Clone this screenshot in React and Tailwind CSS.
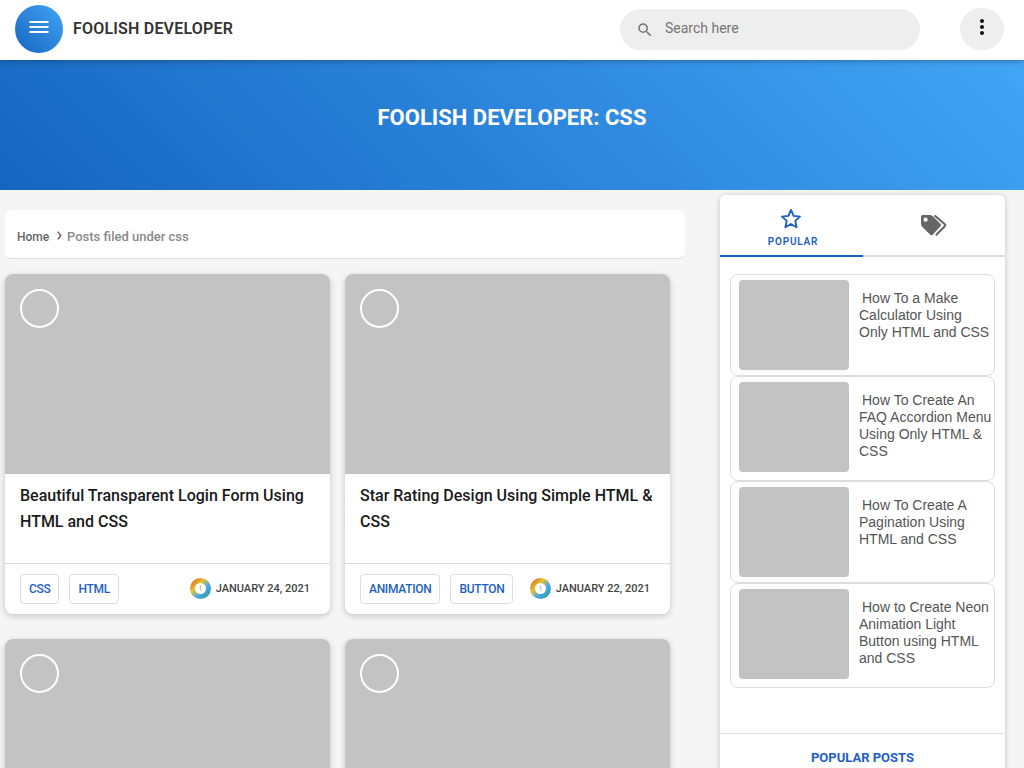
import { MdSearch, MdMoreVert } from "react-icons/md";

const posts = [
  { title: "Beautiful Transparent Login Form Using HTML and CSS", tags: ["CSS", "HTML"], date: "JANUARY 24, 2021" },
  { title: "Star Rating Design Using Simple HTML & CSS", tags: ["ANIMATION", "BUTTON"], date: "JANUARY 22, 2021" },
  { title: "", tags: [], date: "" },
  { title: "", tags: [], date: "" },
];

const popular = [
  { lines: ["How To a Make", "Calculator Using", "Only HTML and CSS"] },
  { lines: ["How To Create An", "FAQ Accordion Menu", "Using Only HTML &", "CSS"] },
  { lines: ["How To Create A", "Pagination Using", "HTML and CSS"] },
  { lines: ["How to Create Neon", "Animation Light", "Button using HTML", "and CSS"] },
];

function ClockBadge() {
  return (
    <span className="-mt-px flex size-[21px] items-center justify-center rounded-full bg-[linear-gradient(135deg,#e0702c_12%,#e6c42c_36%,#42a5f5_64%,#2fa572_90%)]">
      <svg viewBox="0 0 11 11" className="size-[11px]">
        <circle cx="5.5" cy="5.5" r="5.5" fill="#fff" />
        <path d="M5.3 2.5v3.2l1.2 1.8" fill="none" stroke="#a9b78a" strokeWidth="1" />
      </svg>
    </span>
  );
}

function Header() {
  return (
    <header className="relative z-10 flex h-[60px] shrink-0 items-start bg-white pl-[15px] pr-5 shadow-[0_1px_6px_rgba(0,0,0,0.3)]">
      <button className="mt-[5px] flex size-12 justify-center rounded-full bg-[linear-gradient(45deg,#1565c0,#42a5f5)] pt-[10px] text-white">
        <svg viewBox="0 0 20 24" className="h-6 w-5">
          <path d="M0.5 6h19v2h-19zM0.5 11h19v2h-19zM0.5 16h19v2h-19z" fill="currentColor" />
        </svg>
      </button>
      <div className="ml-[10px] mt-[17px] text-[16px] font-semibold leading-6 tracking-[0.2px] text-[#333]">FOOLISH DEVELOPER</div>
      <div className="ml-auto mt-[9px] flex h-[41px] w-[300px] items-center rounded-full bg-[#eee] pl-4 text-[#757575]">
        <MdSearch className="mt-px size-[18px]" />
        <span className="ml-[11px] -mt-[3px] text-[14px]">Search here</span>
      </div>
      <button className="ml-10 mt-[8px] flex h-[42px] w-11 justify-center rounded-full bg-[#eee] pt-[7px] text-[#111]">
        <MdMoreVert className="size-6" />
      </button>
    </header>
  );
}

function PostCard({ post }) {
  return (
    <article className="flex h-[340px] w-[325px] flex-col overflow-hidden rounded-lg bg-white shadow-[0_2px_6px_rgba(0,0,0,0.2)]">
      <div className="h-[200px] shrink-0 bg-[#c3c3c3] pl-[15px] pt-[15px]">
        <div className="size-[39px] rounded-full border-2 border-white" />
      </div>
      <h2 className="h-[89px] shrink-0 px-[15px] pt-[9px] text-[16px] font-medium leading-[26px] text-[#1a1a1a]">{post.title}</h2>
      <div className="flex h-[51px] items-center border-t border-[#ddd] pl-[15px] pr-5">
        {post.tags.map((tag) => (
          <span key={tag} className="mr-[10px] h-[30px] rounded-[4px] border border-[#ddd] px-2 text-[12px] font-medium leading-[28px] tracking-[-0.3px] text-[#1d5fc4]">{tag}</span>
        ))}
        {post.date && (
          <span className="ml-auto flex items-center gap-[5px] text-[11px] font-medium text-[#444]">
            <ClockBadge />
            {post.date}
          </span>
        )}
      </div>
    </article>
  );
}

function Sidebar() {
  return (
    <aside className="ml-[35px] mt-[5px] flex h-[700px] w-[285px] flex-col rounded-t-md bg-white shadow-[0_1px_6px_rgba(0,0,0,0.2)]">
      <div className="flex h-[62px] shrink-0">
        <div className="flex w-[143px] flex-col items-center border-b-2 border-[#1565c0] pt-[13px] text-[#1d5fc4]">
          <svg viewBox="0 0 22 22" className="mr-[1px] size-[22px]">
            <path d="M11 2L13.6 7.9L20 8.6L15.3 12.9L16.6 19.2L11 16L5.4 19.2L6.7 12.9L2 8.6L8.4 7.9Z" fill="none" stroke="currentColor" strokeWidth="1.9" strokeLinejoin="round" />
          </svg>
          <span className="mt-[4px] pl-[3px] text-[10px] font-semibold leading-[15px] tracking-[0.8px]">POPULAR</span>
        </div>
        <div className="flex flex-1 justify-center border-b-2 border-[#ddd] pt-[20px] text-[#666]">
          <svg viewBox="0 0 26 21" className="h-[21px] w-[26px]" fill="currentColor">
            <path fillRule="evenodd" d="M1.6 0H8.5Q10.4 0 11.8 1.3L19.6 9.1Q20.6 10.2 19.6 11.3L11.6 19.8Q10.4 20.9 9.3 19.8L1.4 11.9Q0 10.5 0 8.8V1.6Q0 0 1.6 0ZM4.6 2.6A2.1 2.1 0 1 0 4.6 6.8A2.1 2.1 0 1 0 4.6 2.6Z" />
            <path d="M13.5.4L23.8 9.2Q24.7 10.2 23.8 11.2L14.8 20.2" fill="none" stroke="currentColor" strokeWidth="2" />
          </svg>
        </div>
      </div>
      <div className="mx-[10px] mt-[17px] flex flex-col">
        {popular.map(({ lines }) => (
          <div key={lines[0]} className="flex rounded-lg border border-[#ddd] pb-[5px] pl-2 pt-[5px]">
            <div className="h-[90px] w-[110px] shrink-0 rounded-[4px] bg-[#c3c3c3]" />
            <p className="ml-[10px] mt-[10px] whitespace-nowrap pb-[15px] font-['Liberation_Sans',Arial,sans-serif] text-[14px] leading-[17px] text-[#555]">
              {lines.map((line, i) => (
                <span key={line} className={i === 0 ? "block pl-[3px]" : "block"}>{line}</span>
              ))}
            </p>
          </div>
        ))}
      </div>
      <div className="mt-[45px] border-t border-[#ddd] pt-[14px] text-center text-[13px] font-bold leading-5 text-[#1d5fc4]">POPULAR POSTS</div>
    </aside>
  );
}

export default function App() {
  return (
    <div className="flex h-screen w-full flex-col overflow-hidden bg-[#f5f5f5] font-['Roboto',sans-serif]">
      <Header />
      <section className="flex h-[130px] shrink-0 justify-center bg-[linear-gradient(45deg,#1565c0,#42a5f5)] pt-[43px] text-[22px] font-bold leading-[30px] text-white">
        <h1>FOOLISH DEVELOPER: CSS</h1>
      </section>
      <div className="flex items-start pl-[5px]">
        <main className="w-[680px] pt-5">
          <nav className="flex h-[49px] items-center rounded-md border-b border-[#ddd] bg-white pl-3 pt-[5px] text-[13px] font-medium text-[#8a8a8a]">
            <span className="w-[32px] text-[12px] text-[#666]">Home</span>
            <svg viewBox="0 0 5 9" className="ml-[8px] mr-[5px] -mt-[2px] h-[9px] w-[5px]">
              <path d="M.8.6Q2.4 2.6 3.8 4.5Q2.4 6.4.8 8.4" fill="none" stroke="#666" strokeWidth="1.5" />
            </svg>
            <span>Posts filed under css</span>
          </nav>
          <div className="mt-[15px] grid grid-cols-[325px_325px] gap-x-[15px] gap-y-[25px]">
            {posts.map((post, i) => <PostCard key={i} post={post} />)}
          </div>
        </main>
        <Sidebar />
      </div>
    </div>
  );
}
